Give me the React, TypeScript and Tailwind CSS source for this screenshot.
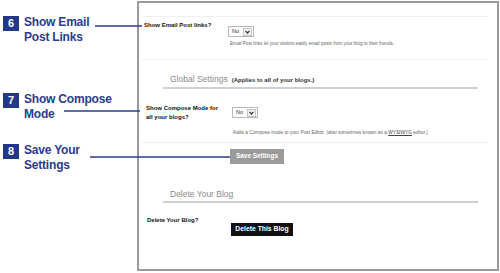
import React from "react";

const navy = "#2b3b8f";

function Callout({ n, lines, className }: { n: string; lines: string[]; className: string }) {
  return (
    <div className={`flex items-start ${className}`}>
      <div className="w-[16px] h-[15px] ml-[3px] mt-[1px] bg-[#24388a] text-white text-[11px] font-bold flex items-center justify-center leading-none">
        {n}
      </div>
      <div className="ml-[5px] text-[12px] leading-[15px] font-bold tracking-[-0.2px] text-[#2b3b8f]">
        {lines.map((l) => (
          <div key={l}>{l}</div>
        ))}
      </div>
    </div>
  );
}

function Select({ className }: { className: string }) {
  return (
    <div className={`flex items-center h-[11px] w-[26px] border border-[#b8b8b8] bg-white ${className}`}>
      <span className="ml-[3px] text-[5.5px] leading-none text-[#333]">No</span>
      <div className="ml-auto mr-[1px] w-[9px] h-[8px] border border-[#c4c4c4] bg-[#f3f3f3] flex items-center justify-center">
        <svg width="5" height="4" viewBox="0 0 5 4">
          <path d="M0.5 0.8 L2.5 3 L4.5 0.8" fill="none" stroke="#333" strokeWidth="1.2" />
        </svg>
      </div>
    </div>
  );
}

function Rule({ className }: { className: string }) {
  return <div className={`h-px w-[346px] ml-[3px] bg-[#efefef] ${className}`} />;
}

function Header({ title, note, className }: { title: string; note?: string; className: string }) {
  return (
    <div className={className}>
      <div className="flex items-baseline ml-[31px] leading-[12px]">
        <span className="text-[8.5px] text-[#8a8a8a]">{title}</span>
        {note && <span className="ml-[4px] text-[6px] font-bold text-[#333]">{note}</span>}
      </div>
      <div className="mt-[1px] ml-[24px] w-[315px] h-[2px] bg-[#d0d0d0]" />
    </div>
  );
}

export default function App() {
  return (
    <div
      className="relative w-[500px] h-[273px] bg-white overflow-hidden flex"
      style={{ fontFamily: '"Liberation Sans", Arial, sans-serif' }}
    >
      {/* --- callouts --- */}
      <div className="w-[137px] shrink-0 flex flex-col">
        <Callout n="6" lines={["Show Email", "Post Links"]} className="mt-[15px]" />
        <Callout n="7" lines={["Show Compose", "Mode"]} className="mt-[47px]" />
        <Callout n="8" lines={["Save Your", "Settings"]} className="mt-[21px]" />
      </div>

      {/* --- settings screenshot --- */}
      <div className="mt-[1px] w-[362px] h-[270px] border-2 border-[#9a9a9a] flex flex-col">
        <Rule className="mt-[13px]" />

        <div className="flex">
          <div className="ml-[5px] w-[84px] mt-[4px] text-[6px] leading-[9px] font-bold text-[#111]">
            Show Email Post links?
          </div>
          <div className="flex flex-col">
            <Select className="mt-[9px]" />
            <div className="ml-[2px] mt-[3px] text-[4.6px] leading-[7px] text-[#666] whitespace-nowrap">
              Email Post links let your visitors easily email posts from your blog to their friends.
            </div>
          </div>
        </div>

        <Rule className="mt-[12px]" />

        <Header title="Global Settings" note="(Applies to all of your blogs.)" className="mt-[13px]" />

        <div className="flex">
          <div className="ml-[7px] w-[86px] mt-[15px] text-[6px] leading-[9px] font-bold text-[#111]">
            Show Compose Mode for
            <br />
            all your blogs?
          </div>
          <div className="flex flex-col">
            <Select className="mt-[18px]" />
            <div className="ml-[1px] mt-[11px] text-[4.8px] leading-[7px] text-[#666] whitespace-nowrap">
              Adds a Compose mode to your Post Editor. (also sometimes known as a{" "}
              <span className="underline text-[#444]">WYSIWYG</span> editor.)
            </div>
          </div>
        </div>

        <Rule className="mt-[6px]" />

        <button className="mt-[6px] ml-[91px] w-[54px] h-[15px] bg-[#9b9b9b] text-white text-[6.4px] font-bold leading-none">
          Save Settings
        </button>

        <Header title="Delete Your Blog" className="mt-[24px]" />

        <div className="flex">
          <div className="ml-[8px] w-[84px] mt-[13px] text-[6px] leading-[9px] font-bold text-[#111]">
            Delete Your Blog?
          </div>
          <button className="mt-[20px] w-[62px] h-[13px] bg-[#111] text-white text-[6.8px] font-bold leading-none">
            Delete This Blog
          </button>
        </div>
      </div>

      {/* --- connector lines --- */}
      <svg className="absolute inset-0 pointer-events-none" width="500" height="273">
        <line x1="95" y1="26" x2="142" y2="26" stroke={navy} strokeWidth="1.5" />
        <line x1="64" y1="111" x2="140" y2="111" stroke={navy} strokeWidth="1.5" />
        <line x1="90" y1="157" x2="230" y2="157" stroke={navy} strokeWidth="1.5" />
      </svg>
    </div>
  );
}
